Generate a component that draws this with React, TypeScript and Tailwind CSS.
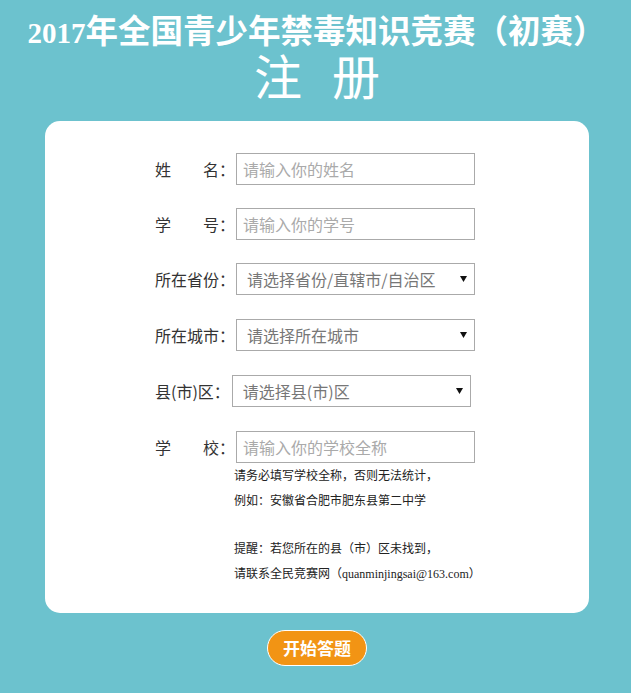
import React from "react";

const cjk = { fontFamily: '"Microsoft YaHei", "Noto Sans CJK SC", sans-serif' };

function Label({ children }: { children: React.ReactNode }) {
  return (
    <span className="text-[16px] leading-[32px] text-[#333] whitespace-pre" style={cjk}>
      {children}
    </span>
  );
}

function TextInput({ placeholder }: { placeholder: string }) {
  return (
    <input
      className="h-[32px] w-[239px] border border-[#aaa] bg-white px-[6px] text-[16px] text-[#333] placeholder:text-[#aaa] outline-none"
      style={cjk}
      placeholder={placeholder}
    />
  );
}

function SelectBox({ text }: { text: string }) {
  return (
    <div
      className="flex h-[32px] w-[239px] items-center justify-between border border-[#aaa] bg-white pl-[10px] pr-[6px] text-[16px] text-[#777]"
      style={cjk}
    >
      <span>{text}</span>
      <svg width="7" height="6" viewBox="0 0 7 6" className="mr-[1px]">
        <polygon points="0,0 7,0 3.5,6" fill="#111" />
      </svg>
    </div>
  );
}

export default function App() {
  return (
    <div className="min-h-[693px] w-full bg-[#6cc2ce]">
      <div className="flex flex-col items-center pt-[12px]">
        <div
          className="pl-[2px] text-[32.5px] font-bold leading-[40px] text-white"
          style={{ fontFamily: '"Liberation Serif", "Noto Sans CJK SC", serif' }}
        >
          <span className="text-[29px]">2017</span>年全国青少年禁毒知识竞赛（初赛）
        </div>
        <div
          className="mt-[1px] flex gap-[30px] pl-[3px] text-[48px] leading-[50px] text-white"
          style={{ fontFamily: '"Liberation Serif", "Noto Sans CJK SC", serif' }}
        >
          <span>注</span>
          <span>册</span>
        </div>
      </div>

      <div className="ml-[45px] mt-[17px] h-[492px] w-[544px] rounded-[15px] bg-white pl-[110px] pt-[32px]">
        <div className="flex items-center">
          <Label>{"姓　　名："}</Label>
          <div className="ml-[1px]">
            <TextInput placeholder="请输入你的姓名" />
          </div>
        </div>
        <div className="mt-[23px] flex items-center">
          <Label>{"学　　号："}</Label>
          <div className="ml-[1px]">
            <TextInput placeholder="请输入你的学号" />
          </div>
        </div>
        <div className="mt-[23px] flex items-center">
          <Label>{"所在省份："}</Label>
          <div className="ml-[1px]">
            <SelectBox text="请选择省份/直辖市/自治区" />
          </div>
        </div>
        <div className="mt-[24px] flex items-center">
          <Label>{"所在城市："}</Label>
          <div className="ml-[1px]">
            <SelectBox text="请选择所在城市" />
          </div>
        </div>
        <div className="mt-[24px] flex items-center">
          <Label>{"县(市)区："}</Label>
          <div className="ml-[2px]">
            <SelectBox text="请选择县(市)区" />
          </div>
        </div>
        <div className="mt-[24px] flex items-center">
          <Label>{"学　　校："}</Label>
          <div className="ml-[1px]">
            <TextInput placeholder="请输入你的学校全称" />
          </div>
        </div>
        <div
          className="ml-[79px] mt-[-1px] text-[12px] leading-[25px] text-[#222]"
          style={{ fontFamily: '"SimSun", "Noto Sans CJK SC", sans-serif' }}
        >
          <div>请务必填写学校全称，否则无法统计，</div>
          <div>例如：安徽省合肥市肥东县第二中学</div>
          <div className="h-[23px]" />
          <div>提醒：若您所在的县（市）区未找到，</div>
          <div>
            请联系全民竞赛网（
            <span style={{ fontFamily: '"Liberation Serif", serif' }}>quanminjingsai@163.com</span>）
          </div>
        </div>
      </div>

      <div className="mt-[17px] flex justify-center pl-[3px]">
        <button
          className="h-[36px] w-[100px] rounded-full border border-white bg-[#f29414] text-[17px] font-bold text-white"
          style={cjk}
        >
          开始答题
        </button>
      </div>
    </div>
  );
}
